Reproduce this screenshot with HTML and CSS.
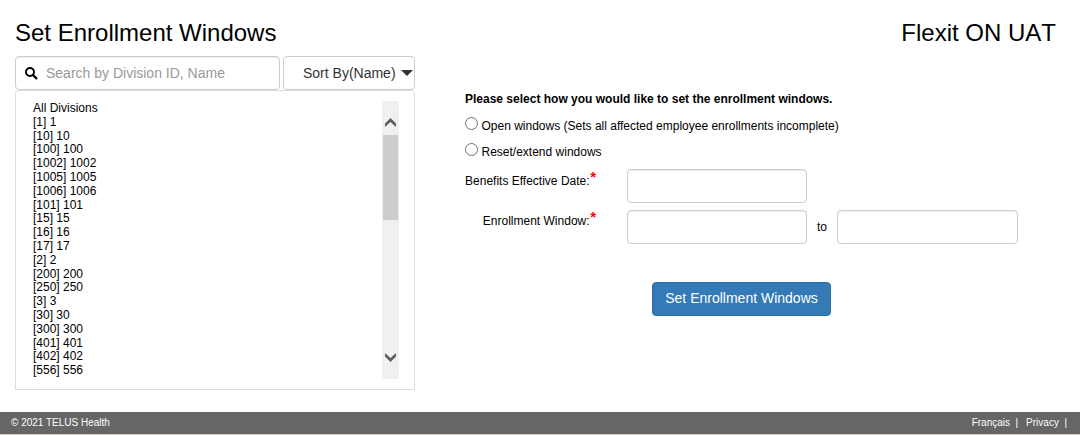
FILE: index.html
```html
<!DOCTYPE html>
<html lang="en">
<head>
<meta charset="utf-8">
<title>Set Enrollment Windows</title>
<link rel="stylesheet" href="styles.css">
</head>
<body>
<header class="header">
  <h1 class="title">Set Enrollment Windows</h1>
  <div class="title client">Flexit ON UAT</div>
</header>
<main class="main">
  <section class="divisions">
    <div class="toolbar">
      <label class="control search">
        <svg class="search-icon" viewBox="0 0 13 13" width="13" height="13"><circle cx="5" cy="5" r="4" fill="none" stroke="#000" stroke-width="1.9"/><path d="M8 8l3.4 3.4" stroke="#000" stroke-width="2.2" stroke-linecap="round"/></svg>
        <input class="search-input" type="text" placeholder="Search by Division ID, Name">
      </label>
      <button class="control sort" type="button"><span>Sort By(Name)</span><svg class="caret" width="12" height="6" viewBox="0 0 12 6"><path d="M0 0h12L6 6z" fill="#333"/></svg></button>
    </div>
    <div class="panel">
      <ul class="list">
        <li>All Divisions</li><li>[1] 1</li><li>[10] 10</li><li>[100] 100</li><li>[1002] 1002</li><li>[1005] 1005</li><li>[1006] 1006</li><li>[101] 101</li><li>[15] 15</li><li>[16] 16</li><li>[17] 17</li><li>[2] 2</li><li>[200] 200</li><li>[250] 250</li><li>[3] 3</li><li>[30] 30</li><li>[300] 300</li><li>[401] 401</li><li>[402] 402</li><li>[556] 556</li>
      </ul>
      <div class="scrollbar">
        <svg class="arrow-up" width="11" height="9" viewBox="0 0 11 9"><path d="M0 5.5L5.5 0L11 5.5V9L5.5 4L0 9z" fill="#606060"/></svg>
        <div class="thumb"></div>
        <svg class="arrow-down" width="11" height="9" viewBox="0 0 11 9"><path d="M0 3.5L5.5 9L11 3.5V0L5.5 5L0 0z" fill="#606060"/></svg>
      </div>
    </div>
  </section>
  <form class="form">
    <p class="prompt">Please select how you would like to set the enrollment windows.</p>
    <label class="option"><input class="radio" type="radio" name="mode"><span>Open windows (Sets all affected employee enrollments incomplete)</span></label>
    <label class="option"><input class="radio" type="radio" name="mode"><span>Reset/extend windows</span></label>
    <div class="field first">
      <label class="field-label">Benefits Effective Date:<span class="required">*</span></label>
      <input class="control date" type="text">
    </div>
    <div class="field">
      <label class="field-label">Enrollment Window:<span class="required">*</span></label>
      <input class="control date" type="text">
      <span class="to">to</span>
      <input class="control date end" type="text">
    </div>
    <button class="submit" type="button">Set Enrollment Windows</button>
  </form>
</main>
<footer class="footer">
  <span>© 2021 TELUS Health</span>
  <nav class="links"><a>Français</a><span class="bar">|</span><a class="privacy">Privacy</a><span class="bar">|</span></nav>
</footer>
</body>
</html>
```
FILE: styles.css
```css
* { box-sizing: border-box; }
body {
  margin: 0;
  height: 435px;
  display: flex;
  flex-direction: column;
  overflow: hidden;
  background: #fff;
  color: #000;
  font: 12px/14px "Liberation Sans", Arial, sans-serif;
}
.header {
  height: 56px;
  padding: 19px 24px 0 15px;
  display: flex;
  justify-content: space-between;
}
.title { margin: 0; font-size: 24px; line-height: 28px; font-weight: 400; }
.client { font-kerning: none; }
.main { height: 356px; display: flex; padding-left: 15px; }
.divisions { width: 400px; }
.toolbar { display: flex; gap: 3px; }
.control {
  height: 34px;
  margin: 0;
  border: 1px solid #ccc;
  border-radius: 4px;
  background: #fff;
  box-shadow: inset 0 1px 1px rgba(0, 0, 0, .075);
}
.search { width: 265px; display: flex; align-items: center; padding-left: 9px; }
.search-input {
  flex: 1;
  min-width: 0;
  margin-left: 8px;
  padding: 0;
  border: 0;
  outline: 0;
  background: none;
  font: 14px/20px "Liberation Sans", Arial, sans-serif;
}
.search-input::placeholder { color: #999; }
.sort {
  width: 132px;
  padding: 0 1px 0 19px;
  display: flex;
  align-items: center;
  justify-content: space-between;
  box-shadow: none;
  color: #333;
  font: 14px/20px "Liberation Sans", Arial, sans-serif;
}
.panel {
  height: 300px;
  display: flex;
  justify-content: space-between;
  padding: 10px 15px 10px 17px;
  border: 1px solid #ddd;
  border-radius: 4px 4px 0 0;
}
.list { margin: 0; padding: 1px 0 0; list-style: none; line-height: 13.8px; }
.scrollbar {
  width: 17px;
  height: 278px;
  display: flex;
  flex-direction: column;
  align-items: center;
  padding: 17px 0;
  background: #f0f0f0;
}
.thumb { width: 15px; height: 85px; margin-top: 8px; background: #cdcdcd; }
.arrow-down { margin-top: auto; }
.form { margin-left: 50px; padding-top: 36px; }
.prompt { margin: 0 0 11px; font-weight: 700; }
.option { display: flex; height: 26px; }
.option span { padding-top: 2px; }
.radio {
  appearance: none;
  width: 13px;
  height: 13px;
  margin: 0 3.5px 0 0;
  border: 1px solid #707070;
  border-radius: 50%;
  background: #fff;
}
.field { display: flex; height: 41px; }
.field-label { width: 131px; margin-right: 31px; padding-top: 4px; text-align: right; white-space: nowrap; }
.first .field-label { padding-top: 5px; }
.required { margin-left: .6px; color: red; font-size: 15px; font-weight: 700; line-height: 0; position: relative; top: -3px; }
.date { width: 180px; }
.to { width: 30px; padding-top: 10px; text-align: center; }
.end { width: 181px; }
.submit {
  display: block;
  width: 179px;
  height: 34px;
  margin: 31px 0 0 187px;
  padding: 0 0 2px;
  border: 1px solid #2e6da4;
  border-radius: 4px;
  background: #337ab7;
  color: #fff;
  font: 14px/20px "Liberation Sans", Arial, sans-serif;
}
.footer {
  height: 23px;
  display: flex;
  justify-content: space-between;
  padding: 0 13px 0 11px;
  border-bottom: 1px solid #d4cdbe;
  background: #666;
  color: #fff;
  font-size: 10px;
  line-height: 22px;
}
.bar { margin-left: 5.5px; }
.privacy { margin-left: 8px; }
```
